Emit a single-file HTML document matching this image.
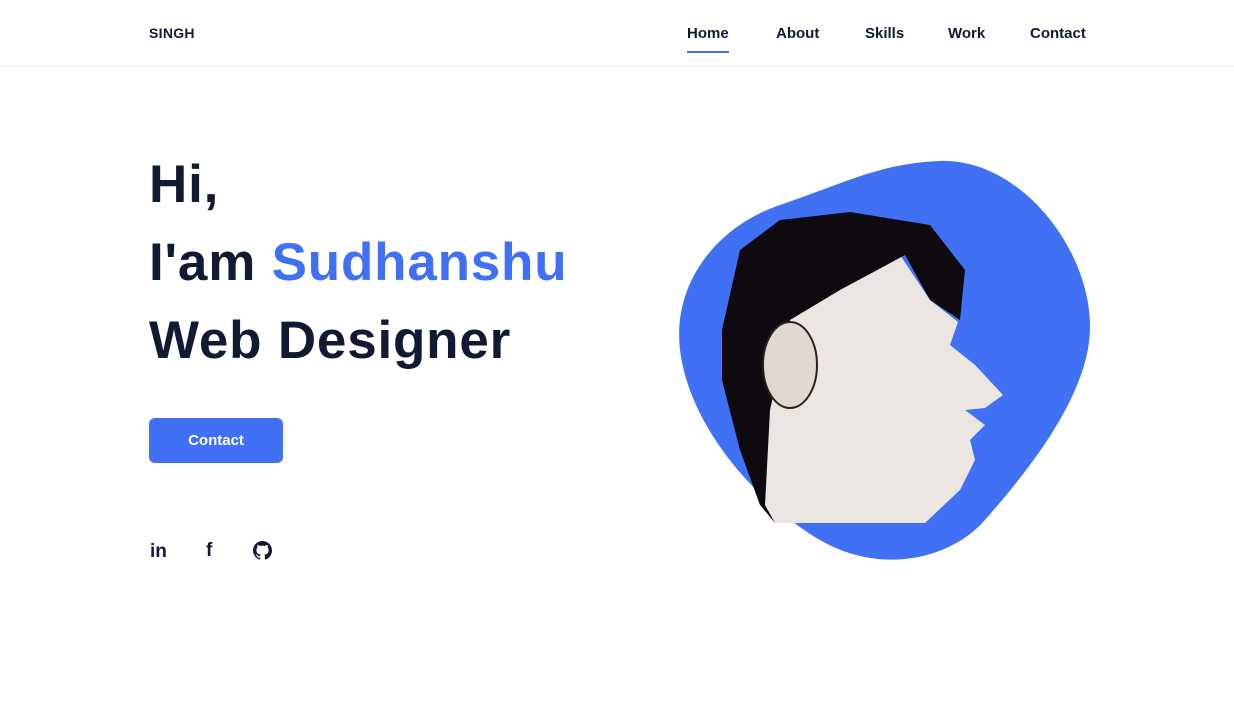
<!DOCTYPE html>
<html><head><meta charset="utf-8"><style>
*{margin:0;padding:0;box-sizing:border-box}
body{width:1234px;height:701px;background:#fff;font-family:"Liberation Sans",sans-serif;color:#121a33;position:relative;overflow:hidden}
header{position:absolute;left:0;top:0;width:1234px;height:66px;border-bottom:1px solid #eef0f3;box-shadow:0 1px 4px rgba(0,0,0,.04)}
.logo{position:absolute;left:149px;top:25px;font-size:14px;font-weight:bold;letter-spacing:.3px}
nav a{position:absolute;top:25px;font-size:15px;font-weight:bold;color:#121a33;text-decoration:none}
.act:after{content:"";position:absolute;left:0;right:0;top:26px;height:2px;background:#4070f4}
h1{position:absolute;left:149px;font-size:53px;font-weight:bold;line-height:60px;white-space:nowrap;letter-spacing:0.8px}
.btn{position:absolute;left:149px;top:418px;width:134px;height:45px;background:#4070f4;color:#fff;border-radius:6px;font-size:15px;font-weight:bold;text-align:center;line-height:45px}
</style></head><body>
<header><div class="logo">SINGH</div>
<nav><a class="act" style="left:687px">Home</a><a style="left:776px">About</a><a style="left:865px">Skills</a><a style="left:948px">Work</a><a style="left:1030px">Contact</a></nav></header>
<h1 style="top:155px">Hi,</h1>
<h1 style="top:233px">I'am <span style="color:#4070f4">Sudhanshu</span></h1>
<h1 style="top:311px">Web Designer</h1>
<div class="btn">Contact</div>
<div style="position:absolute;left:150px;top:541px;font-size:19px;font-weight:bold">in</div>
<div style="position:absolute;left:206px;top:540px;font-size:19px;font-weight:bold">f</div>
<svg style="position:absolute;left:253px;top:541px" width="19" height="19" viewBox="0 0 16 16"><path fill="#121a33" d="M8 0C3.58 0 0 3.58 0 8c0 3.54 2.29 6.53 5.47 7.59.4.07.55-.17.55-.38v-1.33c-2.23.48-2.7-1.07-2.7-1.07-.36-.92-.89-1.17-.89-1.17-.73-.5.06-.49.06-.49.8.06 1.23.83 1.23.83.72 1.22 1.87.87 2.33.66.07-.52.28-.87.5-1.07-1.78-.2-3.64-.89-3.64-3.95 0-.87.31-1.59.82-2.15-.08-.2-.36-1.02.08-2.12 0 0 .67-.21 2.2.82a7.6 7.6 0 0 1 4 0c1.53-1.04 2.2-.82 2.2-.82.44 1.1.16 1.92.08 2.12.51.56.82 1.27.82 2.15 0 3.07-1.87 3.75-3.65 3.95.29.25.54.73.54 1.48v2.2c0 .21.15.46.55.38A8 8 0 0 0 16 8c0-4.42-3.58-8-8-8z"/></svg>
<svg style="position:absolute;left:0;top:0" width="1234" height="701">
<path fill="#4070f4" d="M940 161C1020 158 1092 250 1090 330C1088 400 1020 480 985 520C950 560 880 575 820 540C760 505 690 430 680 350C672 280 720 225 780 205C840 185 880 163 940 161Z"/>
<path fill="#ece6e2" d="M765 505L760 420L765 330L790 300L900 255L930 300L958 322L950 345L975 365L1003 395L985 408L965 410L985 425L970 440L975 460L960 490L925 523L775 523Z"/>
<path fill="#0e0a10" d="M722 330L740 250L780 220L850 212L930 225L965 270L960 320L930 300L905 255L840 290L790 320L770 410L765 505L775 523L760 505L740 450L722 380Z"/>
<ellipse cx="790" cy="365" rx="27" ry="43" fill="#e0d8d3" stroke="#2a2020" stroke-width="2"/>
</svg>
</body></html>
